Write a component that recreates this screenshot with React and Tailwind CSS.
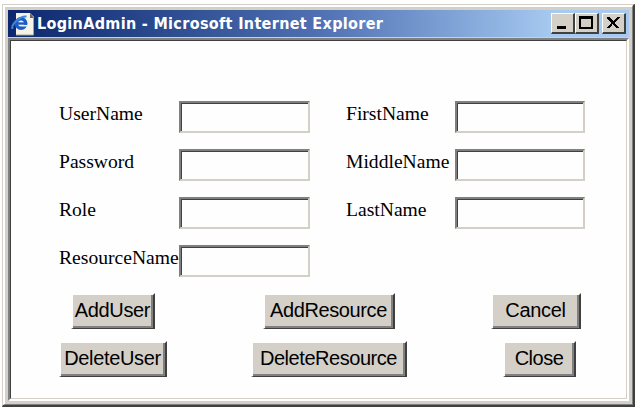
const Field = ({ label, labelWidth, inputWidth }) => {
  return (
    <label className="flex h-8">
      <span
        className={`${labelWidth} h-8 shrink-0 whitespace-nowrap font-['Liberation_Serif',serif] text-[19.6px] leading-[25px] text-black`}
      >
        {label}
      </span>
      <span
        className={`${inputWidth} block h-8 border-2 border-t-[#808080] border-l-[#808080] border-r-[#d4d0c8] border-b-[#d4d0c8]`}
      >
        <input
          type="text"
          className="block h-full w-full border-t border-l border-[#404040] bg-[#fefefe] px-1 outline-none"
        />
      </span>
    </label>
  );
};

const Button = ({ children, className }) => {
  return (
    <button
      className={`${className} h-9 border-t-2 border-r-2 border-b border-l-2 border-t-white border-l-white border-r-[#404040] border-b-[#404040] text-black`}
    >
      <span className="flex h-full items-center justify-center border-r-2 border-b-2 border-[#808080] bg-[#d4d0c8] pb-0.5 pl-px font-['Liberation_Sans',sans-serif] text-[20px] leading-none whitespace-nowrap">
        {children}
      </span>
    </button>
  );
};

const CaptionButton = ({ label, className, children }) => {
  return (
    <button
      aria-label={label}
      className={`${className} h-[21px] border-t border-l border-r-2 border-b-2 border-t-white border-l-white border-r-[#404040] border-b-[#404040] bg-[#d4d0c8]`}
    >
      <svg viewBox="0 0 21 18" className="h-[18px] w-[21px]" shapeRendering="crispEdges">
        {children}
      </svg>
    </button>
  );
};

const PageIcon = () => {
  return (
    <svg viewBox="0 0 24 24" className="h-6 w-6 shrink-0">
      <path d="M5 1h14l4 4v18H5z" fill="#f5f3e6" />
      <path d="M19 1v5h4z" fill="#66665c" />
      <path d="M22.5 6v17H5" fill="none" stroke="#a5a394" />
      <circle cx="10" cy="11.5" r="4.7" fill="none" stroke="#1c5cc8" strokeWidth="3.6" />
      <path d="M11 12.8h6v1.7h-6z" fill="#f5f3e6" />
      <path d="M6 11.5h10" stroke="#1c5cc8" strokeWidth="2.4" />
      <path d="M1.5 17C0 13 8 4 15.5 4.5" fill="none" stroke="#3f86e0" strokeWidth="2" />
    </svg>
  );
};

const App = () => {
  return (
    <div className="h-[410px] w-[642px] overflow-hidden bg-white pt-1 pl-0.5">
      <div className="h-[403px] w-[633px] border-t border-l border-r-2 border-b-2 border-t-[#d4d0c8] border-l-[#d4d0c8] border-r-[#404040] border-b-[#404040]">
        <div className="h-full border-t-2 border-l-2 border-r border-b border-t-white border-l-white border-r-[#808080] border-b-[#808080]">
          <div className="flex h-full flex-col border-3 border-[#d4d0c8]">
            <div className="flex h-[27px] shrink-0 items-center bg-linear-to-r from-[#0c276d] via-[#4f70b3] via-50% to-[#a6caf0] to-88% pr-[3px] pl-[3px]">
              <PageIcon />
              <h1 className="ml-[2px] grow whitespace-nowrap font-['DejaVu_Sans_Condensed','DejaVu_Sans',sans-serif] text-[16px] leading-[27px] font-bold tracking-[0.33px] text-white">
                LoginAdmin - Microsoft Internet Explorer
              </h1>
              <CaptionButton label="Minimize" className="w-6">
                <path d="M5 12h9v3H5z" />
              </CaptionButton>
              <CaptionButton label="Maximize" className="w-6">
                <path d="M3 2h14v13H3zM5 5v8h10V5z" fillRule="evenodd" />
              </CaptionButton>
              <CaptionButton label="Close" className="ml-[3px] w-6">
                <path d="M4 3h3v1h1v1h1v1h1v1h1V6h1V5h1V4h1V3h3v1h-1v1h-1v1h-1v1h-1v1h-1v2h1v1h1v1h1v1h1v1h-3v-1h-1v-1h-1v-1h-1v-1h-1v1H9v1H8v1H7v1H4v-1h1v-1h1v-1h1v-1h1V8H7V7H6V6H5V5H4z" />
              </CaptionButton>
            </div>
            <div className="h-px shrink-0 bg-[#d4d0c8]" />
            <div className="min-h-0 grow border-t-2 border-l-2 border-r-2 border-b-2 border-t-[#808080] border-l-[#808080] border-r-white border-b-white">
              <div className="h-full border border-t-[#404040] border-l-[#404040] border-r-[#d4d0c8] border-b-[#d4d0c8] bg-[#fefefe] pt-[60px] pl-12">
                <div className="flex gap-9">
                  <div className="flex flex-col gap-4">
                    <Field label="UserName" labelWidth="w-[120px]" inputWidth="w-[131px]" />
                    <Field label="Password" labelWidth="w-[120px]" inputWidth="w-[131px]" />
                    <Field label="Role" labelWidth="w-[120px]" inputWidth="w-[131px]" />
                    <Field label="ResourceName" labelWidth="w-[120px]" inputWidth="w-[131px]" />
                  </div>
                  <div className="flex flex-col gap-4">
                    <Field label="FirstName" labelWidth="w-[109px]" inputWidth="w-[130px]" />
                    <Field label="MiddleName" labelWidth="w-[109px]" inputWidth="w-[130px]" />
                    <Field label="LastName" labelWidth="w-[109px]" inputWidth="w-[130px]" />
                  </div>
                </div>
                <div className="mt-4 flex pl-3">
                  <Button className="w-[84px] tracking-[-0.35px]">AddUser</Button>
                  <Button className="ml-[108px] w-[132px] tracking-[-0.4px]">AddResource</Button>
                  <Button className="ml-24 w-[90px] tracking-[-0.3px]">Cancel</Button>
                </div>
                <div className="mt-3 flex">
                  <Button className="w-[108px] tracking-[-0.35px]">DeleteUser</Button>
                  <Button className="ml-[84px] w-[156px] tracking-[-0.45px]">DeleteResource</Button>
                  <Button className="ml-24 w-[73px] tracking-[-0.5px]">Close</Button>
                </div>
              </div>
            </div>
          </div>
        </div>
      </div>
    </div>
  );
};

export default App;
